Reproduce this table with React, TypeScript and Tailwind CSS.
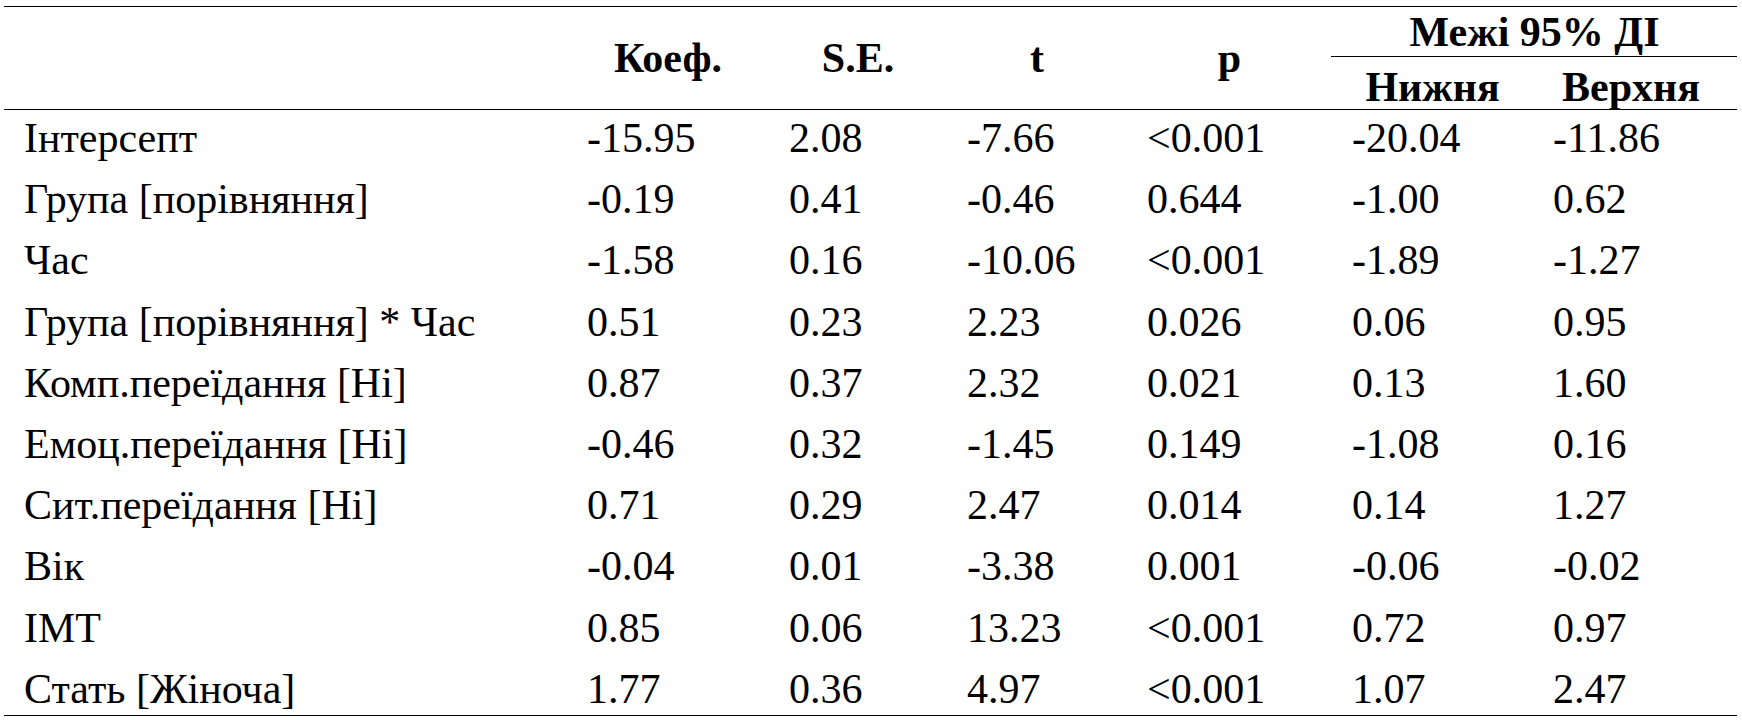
import React from 'react';

type Row = [string, string, string, string, string, string, string];

const rows: Row[] = [
  ['Інтерсепт', '-15.95', '2.08', '-7.66', '<0.001', '-20.04', '-11.86'],
  ['Група [порівняння]', '-0.19', '0.41', '-0.46', '0.644', '-1.00', '0.62'],
  ['Час', '-1.58', '0.16', '-10.06', '<0.001', '-1.89', '-1.27'],
  ['Група [порівняння] * Час', '0.51', '0.23', '2.23', '0.026', '0.06', '0.95'],
  ['Комп.переїдання [Ні]', '0.87', '0.37', '2.32', '0.021', '0.13', '1.60'],
  ['Емоц.переїдання [Ні]', '-0.46', '0.32', '-1.45', '0.149', '-1.08', '0.16'],
  ['Сит.переїдання [Ні]', '0.71', '0.29', '2.47', '0.014', '0.14', '1.27'],
  ['Вік', '-0.04', '0.01', '-3.38', '0.001', '-0.06', '-0.02'],
  ['ІМТ', '0.85', '0.06', '13.23', '<0.001', '0.72', '0.97'],
  ['Стать [Жіноча]', '1.77', '0.36', '4.97', '<0.001', '1.07', '2.47'],
];

const cols = 'grid grid-cols-[571px_202px_178px_180px_205px_201px_196px]';

function HeadCell({ children }: { children: React.ReactNode }) {
  return (
    <div className="row-span-2 pl-3 pr-7 text-center font-bold leading-[102px]">
      {children}
    </div>
  );
}

export default function App() {
  return (
    <div className="min-h-screen bg-white text-black text-[42px] [font-family:'Liberation_Serif','Tinos','DejaVu_Serif','Noto_Serif',serif]">
      <div className="ml-[4px] w-[1733px] pt-[6px]">
        <div className={`${cols} grid-rows-[50px_52px] border-t-[1.5px] border-b-[1.5px] border-black`}>
          <div className="row-span-2" />
          <HeadCell>Коеф.</HeadCell>
          <HeadCell>S.E.</HeadCell>
          <HeadCell>t</HeadCell>
          <HeadCell>p</HeadCell>
          <div className="col-span-2 flex flex-col">
            <div className="pl-3 pr-5 pt-px text-center font-bold leading-[48px]">Межі 95% ДІ</div>
            <div className="-ml-[9px] border-b-[1.5px] border-black" />
          </div>
          <div className="pl-3 pr-7 pt-[8px] text-center font-bold leading-[44px]">Нижня</div>
          <div className="pl-3 pr-7 pt-[8px] text-center font-bold leading-[44px]">Верхня</div>
        </div>

        <div className="border-b-[1.5px] border-black">
          {rows.map((r, i) => (
            <div
              key={r[0]}
              className={`${cols} ${i === rows.length - 1 ? 'h-[54px]' : 'h-[61.2px]'} leading-[56px] whitespace-nowrap`}
            >
              <div className="pl-5">{r[0]}</div>
              {r.slice(1).map((v, j) => (
                <div key={j} className="pl-3">
                  {v}
                </div>
              ))}
            </div>
          ))}
        </div>
      </div>
    </div>
  );
}
